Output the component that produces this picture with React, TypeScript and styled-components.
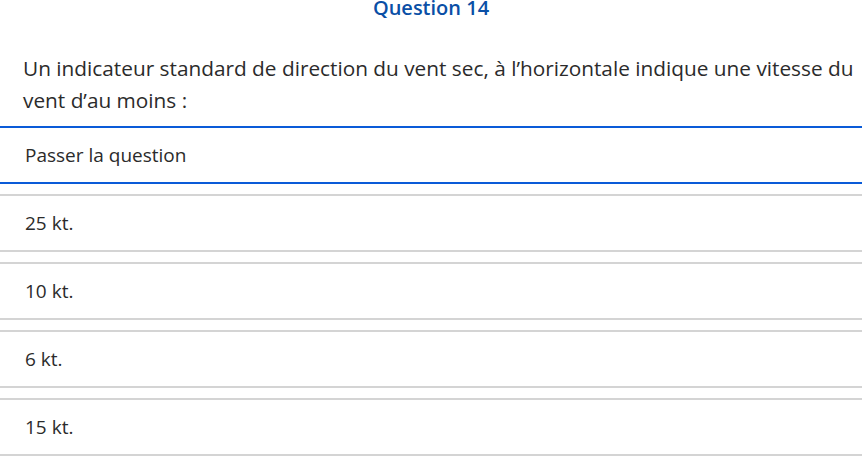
import React from 'react'
import styled, { createGlobalStyle } from 'styled-components'

const GlobalStyle = createGlobalStyle`
  html, body {
    margin: 0;
    padding: 0;
    background: #ffffff;
  }
  body {
    font-family: 'Open Sans', 'Noto Sans', sans-serif;
    color: #333333;
  }
`

const answers = ['25 kt.', '10 kt.', '6 kt.', '15 kt.']

const Page = styled.div`
  width: 862px;
  display: flex;
  flex-direction: column;
`

const Title = styled.h2`
  margin: 0;
  font-size: 20px;
  line-height: 16px;
  font-weight: 600;
  color: #0a4fa6;
  text-align: center;
`

const QuestionText = styled.p`
  margin: 36px 0 10px;
  padding: 0 0 0 23px;
  font-size: 20.8px;
  line-height: 32px;
  color: #2b2b2b;
`

const Choice = styled.div<{ $skip?: boolean }>`
  box-sizing: border-box;
  height: 58px;
  display: flex;
  align-items: center;
  padding: 0 25px;
  margin-bottom: 10px;
  border-top: 2px solid ${(p) => (p.$skip ? '#0a5bd8' : '#d4d4d4')};
  border-bottom: 2px solid ${(p) => (p.$skip ? '#0a5bd8' : '#d4d4d4')};
  font-size: 19px;
  color: #2b2b2b;
  cursor: pointer;
`

const App: React.FC = () => {
  return (
    <Page>
      <GlobalStyle />
      <Title>Question 14</Title>
      <QuestionText>
        Un indicateur standard de direction du vent sec, à l’horizontale indique une vitesse du vent d’au moins :
      </QuestionText>
      <Choice $skip>Passer la question</Choice>
      {answers.map((a) => (
        <Choice key={a}>{a}</Choice>
      ))}
    </Page>
  )
}

export default App
